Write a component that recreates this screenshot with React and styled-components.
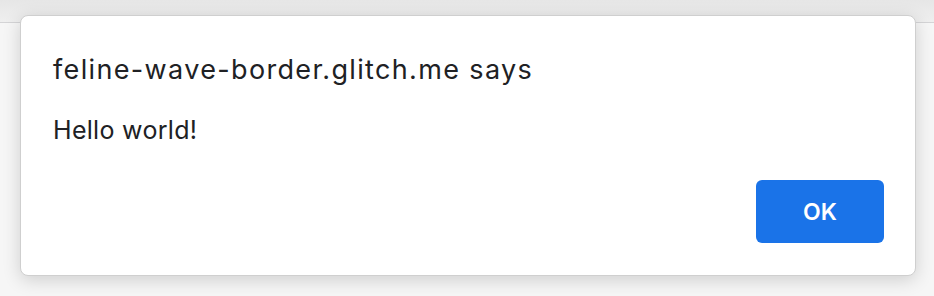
import styled, { createGlobalStyle } from "styled-components";

const Global = createGlobalStyle`
  html, body {
    margin: 0;
    padding: 0;
    width: 934px;
    height: 296px;
    overflow: hidden;
    background: #f6f6f6;
    font-family: Inter, "Liberation Sans", Arial, sans-serif;
  }
`;

const Page = styled.div`
  position: relative;
  width: 934px;
  height: 296px;
`;

const TopStrip = styled.div`
  height: 22px;
  background: linear-gradient(#e6e6e6, #efefef);
  border-bottom: 1px solid #d4d4d6;
`;

const Dialog = styled.div`
  position: absolute;
  left: 20px;
  top: 15px;
  width: 896px;
  height: 261px;
  box-sizing: border-box;
  background: #fff;
  border: 1px solid #cfcfcf;
  border-radius: 8px;
  box-shadow: 0 4px 18px rgba(0, 0, 0, 0.16);
  padding: 35px 31px 32px 32px;
  display: flex;
  flex-direction: column;
`;

const Title = styled.div`
  font-size: 27px;
  line-height: 38px;
  letter-spacing: 1.35px;
  color: #202124;
`;

const Message = styled.div`
  margin-top: 26px;
  font-size: 25px;
  line-height: 30px;
  letter-spacing: 0.3px;
  color: #202124;
`;

const Actions = styled.div`
  margin-top: auto;
  display: flex;
  justify-content: flex-end;
`;

const Button = styled.button`
  width: 128px;
  height: 63px;
  border: none;
  border-radius: 6px;
  background: ${(p) => (p.primary ? "#1a73e8" : "#fff")};
  color: ${(p) => (p.primary ? "#fff" : "#1a73e8")};
  font-family: inherit;
  font-size: 23px;
  font-weight: 600;
  cursor: pointer;
`;

export default function App() {
  return (
    <Page>
      <Global />
      <TopStrip />
      <Dialog>
        <Title>feline-wave-border.glitch.me says</Title>
        <Message>Hello world!</Message>
        <Actions>
          <Button primary>OK</Button>
        </Actions>
      </Dialog>
    </Page>
  );
}
